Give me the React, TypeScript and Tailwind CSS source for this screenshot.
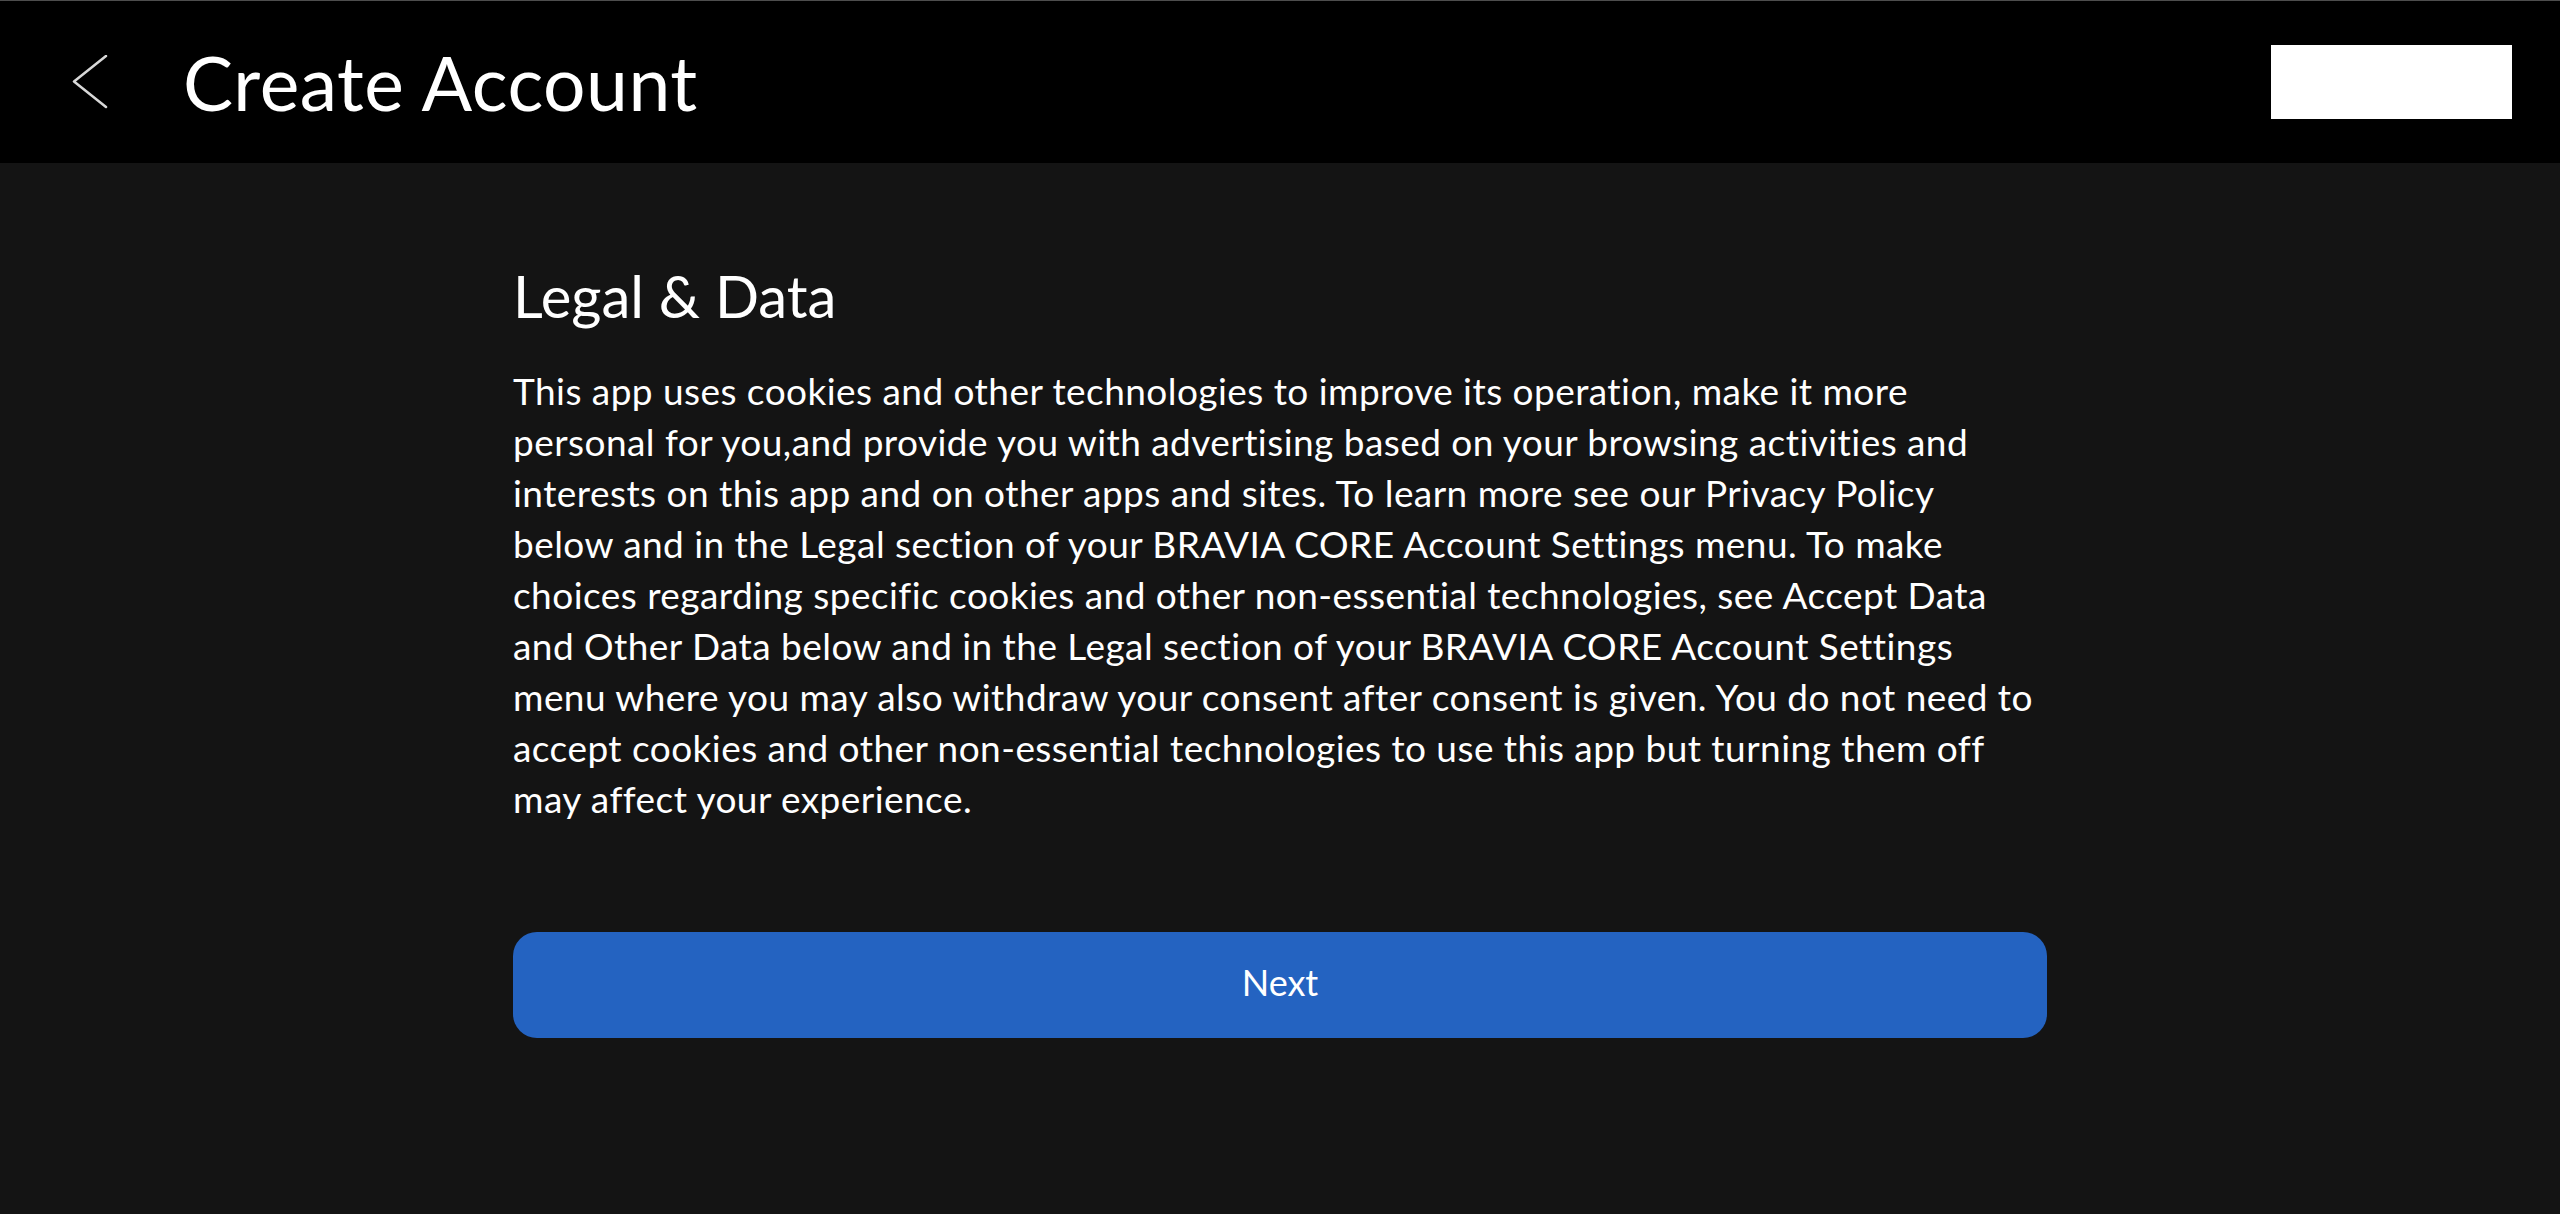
const lines = [
  "This app uses cookies and other technologies to improve its operation, make it more",
  "personal for you,and provide you with advertising based on your browsing activities and",
  "interests on this app and on other apps and sites. To learn more see our Privacy Policy",
  "below and in the Legal section of your BRAVIA CORE Account Settings menu. To make",
  "choices regarding specific cookies and other non-essential technologies, see Accept Data",
  "and Other Data below and in the Legal section of your BRAVIA CORE Account Settings",
  "menu where you may also withdraw your consent after consent is given. You do not need to",
  "accept cookies and other non-essential technologies to use this app but turning them off",
  "may affect your experience.",
];

function BackChevron() {
  return (
    <svg width="36" height="54" viewBox="0 0 36 54" fill="none" className="shrink-0">
      <polyline points="34,1 2,26.5 34,52" stroke="#d8d8d8" strokeWidth="2.5" strokeLinecap="round" strokeLinejoin="round" />
    </svg>
  );
}

export default function App() {
  return (
    <div className="min-h-[1214px] bg-[#141414] text-white font-['Lato','Noto_Sans',sans-serif]">
      <header className="h-[163px] bg-black border-t border-[#4d4d4d] flex items-center pl-[72px] pr-[48px]">
        <BackChevron />
        <h1 className="ml-[75px] text-[75px] leading-none font-normal tracking-[0.5px]">Create Account</h1>
        <div className="ml-auto w-[241px] h-[74px] bg-white" />
      </header>

      <main className="w-[1534px] mx-auto pt-[98px]">
        <h2 className="text-[58px] leading-[1.2] font-normal">Legal &amp; Data</h2>
        <p className="mt-[34px] text-[37px] leading-[51px] tracking-[0.45px] whitespace-nowrap">
          {lines.map((line, i) => (
            <span key={i}>
              {line}
              {i < lines.length - 1 && <br />}
            </span>
          ))}
        </p>
        <button className="mt-[108px] w-full h-[106px] rounded-[24px] bg-[#2463c1] text-[36px] text-white flex items-center justify-center pb-[6px]">
          Next
        </button>
      </main>
    </div>
  );
}
